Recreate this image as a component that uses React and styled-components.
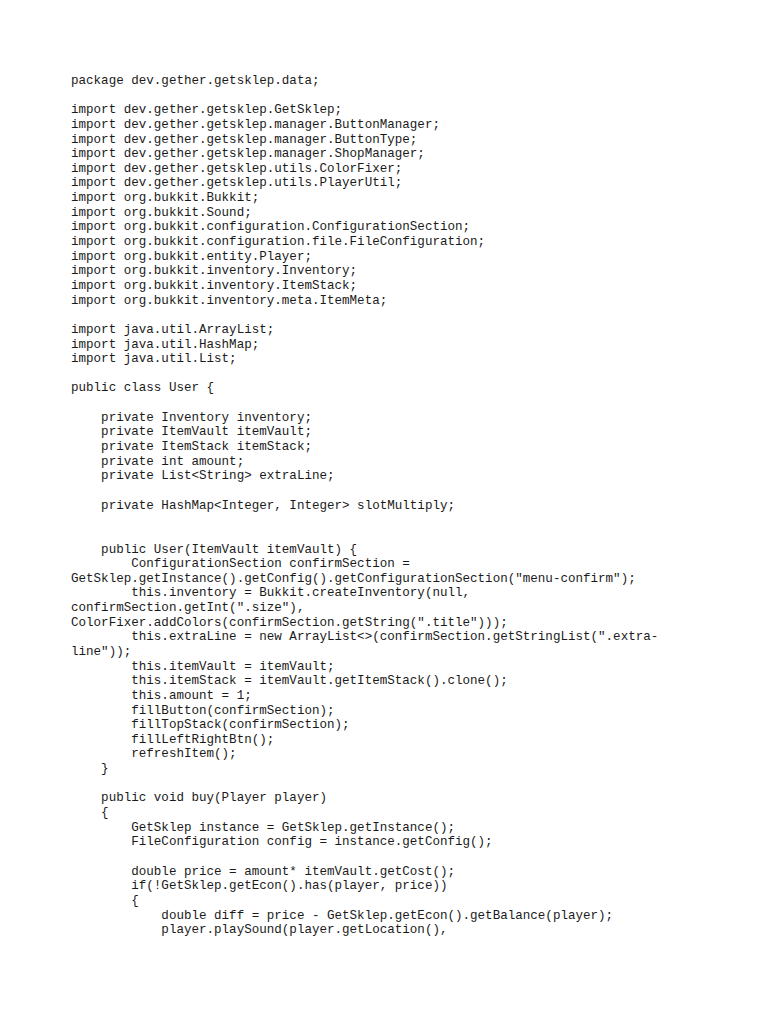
import React from 'react';
import styled, { createGlobalStyle } from 'styled-components';

const GlobalStyle = createGlobalStyle`
    html, body {
        margin: 0;
        padding: 0;
        background: #fff;
    }
`;

const Page = styled.div`
    width: 768px;
    height: 1024px;
    overflow: hidden;
    background-color: #fff;
    padding: 74px 0 0 71px;
    box-sizing: border-box;
`;

const Code = styled.pre`
    margin: 0;
    font-family: 'Liberation Mono', monospace;
    font-size: 12.55px;
    line-height: 14.64px;
    color: #1a1a1a;
    white-space: pre;
`;

const SOURCE = `package dev.gether.getsklep.data;

import dev.gether.getsklep.GetSklep;
import dev.gether.getsklep.manager.ButtonManager;
import dev.gether.getsklep.manager.ButtonType;
import dev.gether.getsklep.manager.ShopManager;
import dev.gether.getsklep.utils.ColorFixer;
import dev.gether.getsklep.utils.PlayerUtil;
import org.bukkit.Bukkit;
import org.bukkit.Sound;
import org.bukkit.configuration.ConfigurationSection;
import org.bukkit.configuration.file.FileConfiguration;
import org.bukkit.entity.Player;
import org.bukkit.inventory.Inventory;
import org.bukkit.inventory.ItemStack;
import org.bukkit.inventory.meta.ItemMeta;

import java.util.ArrayList;
import java.util.HashMap;
import java.util.List;

public class User {

    private Inventory inventory;
    private ItemVault itemVault;
    private ItemStack itemStack;
    private int amount;
    private List<String> extraLine;

    private HashMap<Integer, Integer> slotMultiply;


    public User(ItemVault itemVault) {
        ConfigurationSection confirmSection =
GetSklep.getInstance().getConfig().getConfigurationSection("menu-confirm");
        this.inventory = Bukkit.createInventory(null,
confirmSection.getInt(".size"),
ColorFixer.addColors(confirmSection.getString(".title")));
        this.extraLine = new ArrayList<>(confirmSection.getStringList(".extra-
line"));
        this.itemVault = itemVault;
        this.itemStack = itemVault.getItemStack().clone();
        this.amount = 1;
        fillButton(confirmSection);
        fillTopStack(confirmSection);
        fillLeftRightBtn();
        refreshItem();
    }

    public void buy(Player player)
    {
        GetSklep instance = GetSklep.getInstance();
        FileConfiguration config = instance.getConfig();

        double price = amount* itemVault.getCost();
        if(!GetSklep.getEcon().has(player, price))
        {
            double diff = price - GetSklep.getEcon().getBalance(player);
            player.playSound(player.getLocation(),`;

const App = () => (
    <>
        <GlobalStyle />
        <Page>
            <Code>{ SOURCE }</Code>
        </Page>
    </>
);

export default App;
